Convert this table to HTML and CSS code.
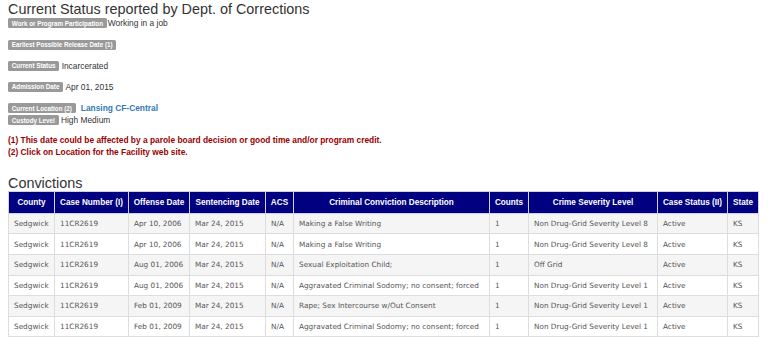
FILE: index.html
```html
<!DOCTYPE html>
<html>
<head>
<meta charset="utf-8">
<link rel="stylesheet" href="styles.css">
</head>
<body>
<div class="page">
  <h2 class="title">Current Status reported by Dept. of Corrections</h2>
  <div class="info-row"><span class="badge">Work or Program Participation</span><span class="value tight">Working in a job</span></div>
  <div class="info-row"><span class="badge">Earliest Possible Release Date (1)</span></div>
  <div class="info-row"><span class="badge">Current Status</span><span class="value">Incarcerated</span></div>
  <div class="info-row"><span class="badge">Admission Date</span><span class="value">Apr 01, 2015</span></div>
  <div class="info-row close"><span class="badge">Current Location (2)</span><a class="link">Lansing CF-Central</a></div>
  <div class="info-row"><span class="badge">Custody Level</span><span class="value">High Medium</span></div>
  <div class="notes">
    <div>(1) This date could be affected by a parole board decision or good time and/or program credit.</div>
    <div>(2) Click on Location for the Facility web site.</div>
  </div>
  <h2 class="section">Convictions</h2>
  <table class="grid">
    <colgroup>
      <col class="c1"><col class="c2"><col class="c3"><col class="c4"><col class="c5">
      <col class="c6"><col class="c7"><col class="c8"><col class="c9"><col class="c10">
    </colgroup>
    <thead>
      <tr><th>County</th><th>Case Number (I)</th><th>Offense Date</th><th>Sentencing Date</th><th>ACS</th><th>Criminal Conviction Description</th><th>Counts</th><th>Crime Severity Level</th><th>Case Status (II)</th><th>State</th></tr>
    </thead>
    <tbody>
      <tr><td>Sedgwick</td><td>11CR2619</td><td>Apr 10, 2006</td><td>Mar 24, 2015</td><td>N/A</td><td>Making a False Writing</td><td>1</td><td>Non Drug-Grid Severity Level 8</td><td>Active</td><td>KS</td></tr>
      <tr><td>Sedgwick</td><td>11CR2619</td><td>Apr 10, 2006</td><td>Mar 24, 2015</td><td>N/A</td><td>Making a False Writing</td><td>1</td><td>Non Drug-Grid Severity Level 8</td><td>Active</td><td>KS</td></tr>
      <tr><td>Sedgwick</td><td>11CR2619</td><td>Aug 01, 2006</td><td>Mar 24, 2015</td><td>N/A</td><td>Sexual Exploitation Child;</td><td>1</td><td>Off Grid</td><td>Active</td><td>KS</td></tr>
      <tr><td>Sedgwick</td><td>11CR2619</td><td>Aug 01, 2006</td><td>Mar 24, 2015</td><td>N/A</td><td>Aggravated Criminal Sodomy; no consent; forced</td><td>1</td><td>Non Drug-Grid Severity Level 1</td><td>Active</td><td>KS</td></tr>
      <tr><td>Sedgwick</td><td>11CR2619</td><td>Feb 01, 2009</td><td>Mar 24, 2015</td><td>N/A</td><td>Rape; Sex Intercourse w/Out Consent</td><td>1</td><td>Non Drug-Grid Severity Level 1</td><td>Active</td><td>KS</td></tr>
      <tr><td>Sedgwick</td><td>11CR2619</td><td>Feb 01, 2009</td><td>Mar 24, 2015</td><td>N/A</td><td>Aggravated Criminal Sodomy; no consent; forced</td><td>1</td><td>Non Drug-Grid Severity Level 1</td><td>Active</td><td>KS</td></tr>
    </tbody>
  </table>
</div>
</body>
</html>
```
FILE: styles.css
```css
html, body {
  margin: 0;
  padding: 0;
  background: #fff;
}
body {
  font-family: "Liberation Sans", Arial, sans-serif;
  font-size: 8.4px;
  color: #333;
}
.page {
  padding: 2px 8px 0 8px;
}
.title, .section {
  font-family: "Liberation Sans", Arial, sans-serif;
  font-weight: normal;
  font-size: 14.4px;
  line-height: 15.84px;
  margin: 0;
  color: #333;
}
.section {
  margin-top: 18.2px;
}
.info-row {
  display: flex;
  align-items: center;
  height: 11px;
  margin-bottom: 10.2px;
}
.info-row.close {
  margin-bottom: 1px;
}
.badge {
  display: inline-flex;
  align-items: center;
  height: 10px;
  padding: 0 3.8px;
  background: #999;
  color: #fff;
  font-weight: bold;
  font-size: 6.3px;
  border-radius: 1.6px;
  white-space: nowrap;
}
.value {
  margin-left: 2.3px;
}
.value.tight {
  margin-left: 1px;
}
.link {
  margin-left: 5px;
  color: #337ab7;
  font-weight: bold;
}
.notes {
  margin-top: -2.2px;
  color: #990000;
  font-weight: bold;
  line-height: 12px;
}
.grid {
  width: 750px;
  table-layout: fixed;
  border-collapse: collapse;
  margin-top: -0.6px;
}
.c1 { width: 46px; }
.c2 { width: 74px; }
.c3 { width: 61px; }
.c4 { width: 76px; }
.c5 { width: 28px; }
.c6 { width: 196px; }
.c7 { width: 39px; }
.c8 { width: 129px; }
.c9 { width: 70px; }
.c10 { width: 31px; }
.grid th {
  background: #000080;
  color: #fff;
  font-family: "Liberation Sans", Arial, sans-serif;
  font-weight: bold;
  font-size: 8.2px;
  height: 20.7px;
  padding: 0 4px;
  text-align: center;
  border: 1px solid #d0d0e0;
  white-space: nowrap;
  overflow: hidden;
}
.grid td {
  font-family: "DejaVu Sans", Verdana, sans-serif;
  font-size: 7.3px;
  color: #555;
  height: 19.6px;
  padding: 0 5px;
  border: 1px solid #ddd;
  white-space: nowrap;
  overflow: hidden;
}
.grid tbody tr:nth-child(odd) td {
  background: #f5f5f5;
}
```
